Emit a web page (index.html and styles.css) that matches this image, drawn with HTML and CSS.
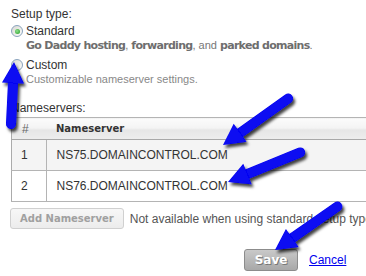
FILE: index.html
```html
<!DOCTYPE html>
<html>
<head>
    <title>Nameservers</title>
    <link rel="stylesheet" href="styles.css">
</head>
<body>
    <div class="page">
        <div class="label">Setup type:</div>

        <div class="option">
            <span class="radio checked"></span>
            <span class="option-title">Standard</span>
        </div>
        <div class="desc desc-strong">
            <b>Go Daddy hosting</b>, <b>forwarding</b>, and <b>parked domains</b>.
        </div>

        <div class="option option-custom">
            <span class="radio"></span>
            <span class="option-title">Custom</span>
        </div>
        <div class="desc">Customizable nameserver settings.</div>

        <div class="label ns-label">Nameservers:</div>

        <table class="ns-table">
            <thead>
                <tr>
                    <th class="col-num">#</th>
                    <th class="col-name">Nameserver</th>
                </tr>
            </thead>
            <tbody>
                <tr class="odd">
                    <td class="col-num">1</td>
                    <td class="col-name">NS75.DOMAINCONTROL.COM</td>
                </tr>
                <tr>
                    <td class="col-num">2</td>
                    <td class="col-name">NS76.DOMAINCONTROL.COM</td>
                </tr>
            </tbody>
        </table>

        <div class="add-row">
            <button type="button" class="btn-add" disabled>Add Nameserver</button>
            <span class="note">Not available when using standard setup type.</span>
        </div>

        <div class="actions">
            <button type="button" class="btn-save">Save</button>
            <a href="#" class="cancel">Cancel</a>
        </div>

        <!-- annotation arrows drawn over the form -->
        <svg class="arrows" width="366" height="276" viewBox="0 0 366 276">
            <defs>
                <filter id="shadow" x="-30%" y="-30%" width="160%" height="160%">
                    <feDropShadow dx="2" dy="3" stdDeviation="1.6" flood-color="#000" flood-opacity="0.75"/>
                </filter>
            </defs>
            <g fill="#0707f2" stroke="#0707f2" filter="url(#shadow)">
                <g transform="translate(14 62) rotate(92.8)">
                    <line x1="16" y1="0" x2="62" y2="0" stroke-width="10" stroke-linecap="round"/>
                    <polygon points="0,0 21,-11 21,11" stroke="none"/>
                </g>
                <g transform="translate(223 145) rotate(-35.5)">
                    <line x1="16" y1="0" x2="80" y2="0" stroke-width="10" stroke-linecap="round"/>
                    <polygon points="0,0 21,-11 21,11" stroke="none"/>
                </g>
                <g transform="translate(228 182) rotate(-22.3)">
                    <line x1="16" y1="0" x2="78" y2="0" stroke-width="10" stroke-linecap="round"/>
                    <polygon points="0,0 21,-11 21,11" stroke="none"/>
                </g>
                <g transform="translate(275 250) rotate(-34.9)">
                    <line x1="16" y1="0" x2="76" y2="0" stroke-width="10" stroke-linecap="round"/>
                    <polygon points="0,0 21,-11 21,11" stroke="none"/>
                </g>
            </g>
        </svg>
    </div>
</body>
</html>
```

FILE: styles.css
```css
html, body {
    margin: 0;
    padding: 0;
    overflow: hidden;
    background-color: #fff;
}

body {
    font-family: "Liberation Sans", Arial, sans-serif;
    font-size: 12px;
    color: #333;
}

.page {
    position: relative;
    width: 366px;
    height: 276px;
    padding: 7px 0 0 11px;
    box-sizing: border-box;
    white-space: nowrap;
}

.label {
    line-height: 14px;
}

.option {
    display: flex;
    align-items: center;
    gap: 3px;
    margin-top: 3px;
    line-height: 14px;
}

.option-custom {
    margin-top: 6px;
}

.radio {
    display: inline-block;
    position: relative;
    width: 10px;
    height: 10px;
    border: 1px solid #8aa3bd;
    border-radius: 50%;
    background: linear-gradient(135deg, #d8d8d2, #fdfdfc);
}

.radio.checked::after {
    content: "";
    position: absolute;
    left: 2.5px;
    top: 2.5px;
    width: 5px;
    height: 5px;
    border-radius: 50%;
    background: radial-gradient(circle at 40% 40%, #8fe08f, #1f9a1f);
}

.desc {
    padding-left: 15px;
    margin-top: 1px;
    line-height: 13px;
    font-size: 11px;
    color: #888;
}

.desc-strong {
    color: #777;
}

.desc-strong b {
    font-family: "DejaVu Sans", Verdana, sans-serif;
    font-size: 11px;
    letter-spacing: -0.7px;
    color: #6e6e6e;
}

.ns-label {
    margin-top: 15px;
}

.ns-table {
    margin-top: 2px;
    width: 380px;
    border-collapse: collapse;
    border-left: 1px solid #ababab;
}

.ns-table th {
    height: 21px;
    padding: 0;
    text-align: left;
    border-top: 1px solid #b4b4b4;
    border-bottom: 1px solid #a8a8a8;
    background: linear-gradient(to bottom, #fbfbfb 0%, #f4f4f4 45%, #e6e6e6 55%, #ededed 100%);
    font-weight: normal;
}

.ns-table th.col-name {
    font-family: "DejaVu Sans", Verdana, sans-serif;
    font-weight: bold;
    font-size: 10px;
    color: #333;
}

.ns-table th.col-num {
    color: #666;
}

.ns-table td {
    height: 30px;
    padding: 0;
    border-bottom: 1px solid #b4b4b4;
}

.ns-table .odd td {
    background-color: #f4f4f4;
}

.col-num {
    width: 24px;
    padding-left: 10px !important;
}

.ns-table td.col-num {
    border-right: 1px solid #b4b4b4;
    padding-left: 9px !important;
}

.ns-table .col-name {
    padding-left: 10px !important;
}

.add-row {
    display: flex;
    align-items: center;
    gap: 6px;
    margin-top: 6px;
    margin-left: -1px;
}

.btn-add {
    height: 21px;
    padding: 0 9px;
    border: 1px solid #d0d0d0;
    border-radius: 3px;
    background: linear-gradient(to bottom, #f7f7f7, #ececec);
    font-family: "DejaVu Sans", Verdana, sans-serif;
    font-weight: bold;
    font-size: 10px;
    color: #a0a0a0;
}

.note {
    color: #555;
}

.actions {
    display: flex;
    align-items: center;
    gap: 11px;
    margin-top: 20px;
    padding-left: 233px;
}

.btn-save {
    width: 54px;
    height: 22px;
    padding: 0;
    border: 1px solid #8c8c8c;
    border-radius: 3px;
    background: linear-gradient(to bottom, #c9c9c9, #a8a8a8);
    font-family: "DejaVu Sans", Verdana, sans-serif;
    font-weight: bold;
    font-size: 12px;
    color: #fff;
    text-shadow: 1px 1px 0 #777;
}

.cancel {
    color: #0000ee;
    text-decoration: underline;
}

.arrows {
    position: absolute;
    left: 0;
    top: 0;
    pointer-events: none;
}
```
